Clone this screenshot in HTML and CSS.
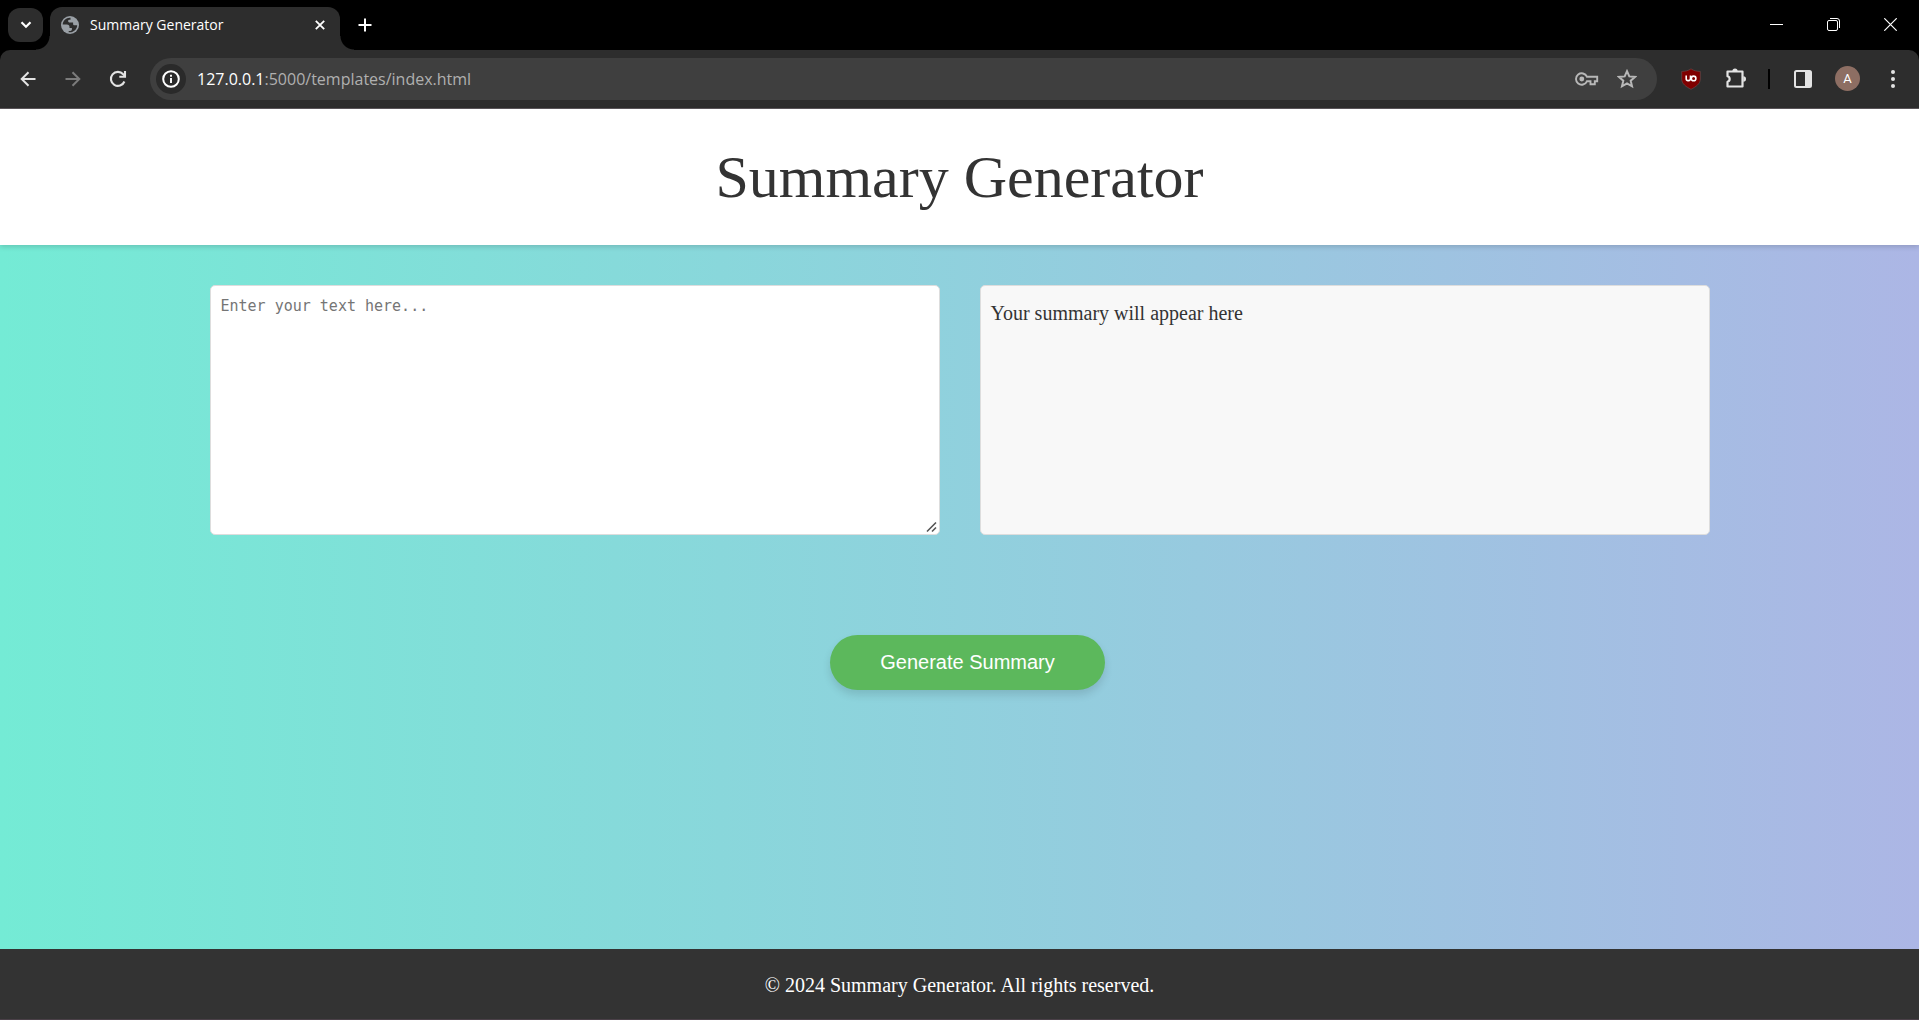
FILE: index.html
```html
<!DOCTYPE html>
<html lang="en">
<head>
<meta charset="utf-8">
<title>Summary Generator</title>
<link rel="stylesheet" href="styles.css">
</head>
<body>
<div class="tabstrip">
  <button class="tab-search" aria-label="Search tabs"><svg width="12" height="8" viewBox="0 0 12 8"><path d="M1.5 1.2 6 5.7l4.500-4.500" fill="none" stroke="#fff" stroke-width="2.200"/></svg></button>
  <div class="tab">
    <svg class="favicon" width="18" height="18" viewBox="0 0 18 18"><circle cx="9" cy="9" r="9" fill="#9aa0a6"/><path d="M8.800 1.700C5 1.700 1.800 4.900 1.700 8.500h4.100c2 0 2.700.9 2.700 2.500v1h2.400v1.500c0 .9-.7 1.400-1.600 1.400H7.700v1.300c4.300.8 8.400-2.600 8.500-6.900h-2.400c-1.300 0-1.700-.6-1.700-1.600V6.500H8.900c-1.300 0-1.800-.6-1.800-1.500s.5-1.300 1.500-1.300h.9V1.700z" fill="#2d2d2d"/></svg>
    <span class="tab-title">Summary Generator</span>
    <button class="plain tab-close" aria-label="Close tab"><svg width="10" height="10" viewBox="0 0 10 10"><path d="M.8.8l8.400 8.400M9.200.8.8 9.200" stroke="#fff" stroke-width="1.800"/></svg></button>
  </div>
  <button class="plain new-tab" aria-label="New tab"><svg width="14" height="14" viewBox="0 0 14 14"><path d="M7 .5v13M.5 7h13" stroke="#fff" stroke-width="2"/></svg></button>
  <div class="window-controls">
    <button class="plain" aria-label="Minimize"><svg width="13" height="13" viewBox="0 0 13 13"><path d="M0 6.500h13" stroke="#fff"/></svg></button>
    <button class="plain" aria-label="Restore"><svg width="13" height="13" viewBox="0 0 13 13" fill="none" stroke="#fff"><rect x=".5" y="2.500" width="10" height="10" rx="1.500"/><path d="M3 .5h7a2.500 2.500 0 0 1 2.500 2.500v7"/></svg></button>
    <button class="plain" aria-label="Close"><svg width="13" height="13" viewBox="0 0 13 13"><path d="M.3.3l12.400 12.400M12.700.3.3 12.700" stroke="#fff" stroke-width="1.200"/></svg></button>
  </div>
</div>
<div class="toolbar-back">
<nav class="toolbar" aria-label="Browser">
  <button class="plain tool" aria-label="Back"><svg width="16" height="16" viewBox="0 0 16 16" fill="none" stroke="#e3e3e3" stroke-width="2"><path d="M15.500 8H2M8.500 1.200 1.700 8l6.800 6.800"/></svg></button>
  <button class="plain tool" aria-label="Forward"><svg width="16" height="16" viewBox="0 0 16 16" fill="none" stroke="#7b7b7b" stroke-width="2"><path d="M.5 8H14M7.500 1.200 14.300 8l-6.800 6.800"/></svg></button>
  <button class="plain tool" aria-label="Reload"><svg width="18" height="18" viewBox="0 0 18 18" fill="none" stroke="#e3e3e3" stroke-width="2.100"><path d="M15.400 11.500A7 7 0 1 1 14.200 4.300L16 6.100"/><path d="M16 1v5.700h-5.700"/></svg></button>
  <div class="omnibox">
    <button class="site-info" aria-label="View site information"><svg width="18" height="18" viewBox="0 0 18 18"><circle cx="9" cy="9" r="7.800" fill="none" stroke="#fff" stroke-width="2"/><path d="M9 8v5M9 4.700v2" stroke="#fff" stroke-width="1.900"/></svg></button>
    <span class="url"><span class="host">127.0.0.1</span>:5000/templates/index.html</span>
    <button class="plain omni-action" aria-label="Passwords"><svg width="24" height="14" viewBox="0 0 24 14" fill="none" stroke="#b8b8b8" stroke-width="1.900"><path d="M11.900 4.700a5.700 5.700 0 1 0 0 4.600h3.600v3h4.300v-3h2.400V4.700z"/><circle cx="6.800" cy="7" r="1.500" fill="#b8b8b8"/></svg></button>
    <button class="plain omni-action" aria-label="Bookmark this tab"><svg width="20" height="20" viewBox="0 0 20 20"><path d="M10 2.200l2.300 5.200 5.700.5-4.300 3.800 1.300 5.600-5-3-5 3 1.300-5.600L2 7.900l5.700-.5z" fill="none" stroke="#b8b8b8" stroke-width="2"/></svg></button>
  </div>
  <button class="plain tool" aria-label="uBlock Origin"><svg width="20" height="22" viewBox="0 0 20 22"><path d="M10 .8C7.500 2.700 4 3.400.7 3.400V11c0 5 4.500 7.800 9.300 10.300C14.800 18.800 19.300 16 19.300 11V3.400C16 3.400 12.500 2.700 10 .8z" fill="#800000" stroke="#6a5050" stroke-width=".6"/><path d="M5.200 7.600v3.300a1.700 1.700 0 0 0 1.700 1.700h.6a2 2 0 0 0 2-2V7.600" fill="none" stroke="#fff" stroke-width="1.600"/><circle cx="12.600" cy="10.400" r="2.300" fill="none" stroke="#fff" stroke-width="1.600"/></svg></button>
  <button class="plain tool" aria-label="Extensions"><svg width="22" height="22" viewBox="0 0 22 22"><path d="M2.500 3.500h15v15h-15v-4.700a2.900 2.900 0 0 0 0-5.600z" fill="none" stroke="#e3e3e3" stroke-width="2.200" stroke-linejoin="round"/><path d="M7.400 3a2.600 2.600 0 0 1 5.200 0zM18.300 8.300a2.700 2.700 0 0 1 0 5.400z" fill="#e3e3e3"/></svg></button>
  <span class="separator"></span>
  <button class="plain tool" aria-label="Side panel"><svg width="18" height="18" viewBox="0 0 18 18"><rect x="1" y="1" width="16" height="16" rx="1.500" fill="none" stroke="#e3e3e3" stroke-width="2"/><path d="M11 1h6v16h-6z" fill="#e3e3e3"/></svg></button>
  <button class="plain tool" aria-label="Profile"><span class="avatar">A</span></button>
  <button class="plain tool" aria-label="Menu"><svg width="4" height="18" viewBox="0 0 4 18" fill="#e3e3e3"><circle cx="2" cy="2" r="2"/><circle cx="2" cy="9" r="2"/><circle cx="2" cy="16" r="2"/></svg></button>
</nav>
</div>
<div class="page">
  <header class="page-header"><h1>Summary Generator</h1></header>
  <main>
    <div class="panels">
      <textarea class="panel source" aria-label="Text to summarize" placeholder="Enter your text here..."></textarea>
      <section class="panel result" aria-label="Summary"><p>Your summary will appear here</p></section>
    </div>
    <div class="actions"><button class="generate">Generate Summary</button></div>
  </main>
  <footer class="page-footer">© 2024 Summary Generator. All rights reserved.</footer>
</div>
</body>
</html>
```
FILE: styles.css
```css
* { box-sizing: border-box; }
body {
  margin: 0;
  min-height: 100vh;
  display: flex;
  flex-direction: column;
  font-family: "Liberation Serif", serif;
  color: #333;
}
svg { display: block; flex: none; }
.plain { border: 0; padding: 0; background: none; display: flex; align-items: center; justify-content: center; }

/* Browser window */
.tabstrip {
  height: 50px;
  padding-left: 8px;
  background: #000;
  display: flex;
  align-items: flex-start;
}
.tab-search {
  width: 35px;
  height: 34px;
  margin-top: 8px;
  border: 0;
  border-radius: 12px;
  padding: 0;
  background: #2d2d2d;
  display: flex;
  align-items: center;
  justify-content: center;
}
.tab {
  position: relative;
  width: 290px;
  height: 43px;
  margin: 7px 0 0 7px;
  padding: 0 11px 7px;
  border-radius: 12px 12px 0 0;
  background: #2d2d2d;
  display: flex;
  align-items: center;
}
.tab::before, .tab::after {
  content: "";
  position: absolute;
  bottom: 0;
  width: 14px;
  height: 14px;
}
.tab::before { left: -14px; background: radial-gradient(circle at 0 0, transparent 13px, #2d2d2d 14px); }
.tab::after { right: -14px; background: radial-gradient(circle at 100% 0, transparent 13px, #2d2d2d 14px); }
.tab-title { flex: 1; margin-left: 11px; color: #fff; font: 14px/20px "Open Sans", sans-serif; }
.tab-close { width: 18px; height: 18px; }
.new-tab { width: 36px; height: 36px; margin: 7px 0 0 7px; }
.window-controls { margin-left: auto; display: flex; }
.window-controls button { width: 57px; height: 49px; }
.toolbar-back { background: #000; }
.toolbar {
  height: 59px;
  padding: 0 4px 1px 5px;
  border-bottom: 1px solid #5c575b;
  border-radius: 10px 10px 0 0;
  background: #2d2d2d;
  display: flex;
  align-items: center;
}
.tool { width: 45px; height: 42px; }
.omnibox {
  flex: 1;
  height: 42px;
  margin: 0 11px 0 10px;
  padding: 0 10px 0 6px;
  border-radius: 21px;
  background: #3f3f3f;
  display: flex;
  align-items: center;
}
.site-info {
  width: 30px;
  height: 30px;
  border: 0;
  border-radius: 50%;
  padding: 0;
  background: #2a2a2a;
  display: flex;
  align-items: center;
  justify-content: center;
}
.url { flex: 1; margin-left: 11px; color: #b0b0b0; font: 16px/24px "Open Sans", sans-serif; }
.host { color: #fff; }
.omni-action { width: 40px; height: 40px; }
.separator { width: 2px; height: 20px; margin: 0 10px; background: #000; }
.avatar {
  width: 25px;
  height: 25px;
  border-radius: 50%;
  background: #8d6e63;
  color: #fff;
  font: 13px/25px Roboto, sans-serif;
  text-align: center;
}

/* Page */
.page {
  flex: 1;
  display: flex;
  flex-direction: column;
  background: linear-gradient(to right, #74ebd5, #acb6e5);
}
.page-header {
  padding: 34px 20px;
  background: #fff;
  box-shadow: 0 2px 5px rgba(0, 0, 0, 0.15);
  text-align: center;
}
h1 { margin: 0; font-size: 60px; line-height: 68px; font-weight: 400; }
main {
  flex: 1;
  width: 100%;
  max-width: 1500px;
  margin: 0 auto;
  padding-top: 40px;
}
.panels { display: grid; grid-template-columns: 1fr 1fr; gap: 40px; }
.panel {
  height: 250px;
  margin: 0;
  padding: 10px;
  border: 1px solid #ddd;
  border-radius: 5px;
  background: #fff;
}
.source { display: block; width: 100%; resize: vertical; font: 15px/20px "DejaVu Sans Mono", monospace; }
.source::placeholder { color: #757575; opacity: 1; }
.source::-webkit-resizer {
  background: url("data:image/svg+xml,%3Csvg xmlns='http://www.w3.org/2000/svg' width='15' height='15'%3E%3Cpath d='M3 12.500 12 3.500M8 12.500l4-4' stroke='%23555' stroke-width='1.600'/%3E%3C/svg%3E") right bottom no-repeat;
}
.result { background: #f8f8f8; font-size: 20px; line-height: 34px; }
.result p { margin: 0; }
.actions { display: flex; justify-content: center; padding: 100px 0 0 16px; }
.generate {
  height: 55px;
  padding: 0 50px 2px;
  border: 0;
  border-radius: 28px;
  background: #5cb85c;
  color: #fff;
  box-shadow: 0 5px 8px rgba(0, 0, 0, 0.12);
  font: 20px/24px "Liberation Sans", sans-serif;
}
.page-footer {
  padding: 25px 20px 22px;
  border-bottom: 1px solid #4a4048;
  background: #333;
  color: #fff;
  font-size: 20px;
  line-height: 23px;
  text-align: center;
}
```
